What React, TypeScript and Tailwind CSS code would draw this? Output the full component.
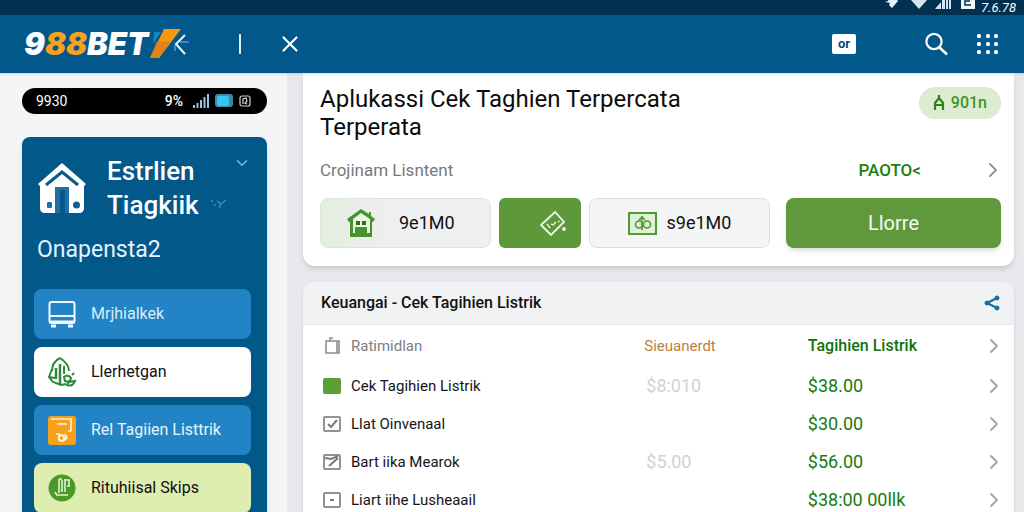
import type { ReactNode } from "react";
import { ChevronDown, ChevronRight, X } from "lucide-react";

function StatusBar() {
  return (
    <div className="flex h-[15px] shrink-0 items-end justify-end overflow-hidden bg-[#02304f] pr-2 text-white">
      <svg className="mb-1.5 h-3 w-4" viewBox="0 0 16 12" fill="#e8f2fa">
        <path d="M2 5 5 4 6 0h6l3 4-6 7-3-3 1-2z" />
      </svg>
      <svg className="mb-1.5 ml-3 h-3 w-4" viewBox="0 0 16 12" fill="#d3e4f1">
        <path d="M0 0h16v3L8 12 0 3z" />
      </svg>
      <svg className="mb-1.5 ml-2 h-3 w-4" viewBox="0 0 16 12" fill="#d3e4f1">
        <path d="M0 12 6 5v7zM7 0h3v12H7zM11 0h2v12h-2zM14 0h2v12h-2z" />
      </svg>
      <svg className="mb-1.5 ml-2.5 h-3 w-[14px]" viewBox="0 0 14 12">
        <path d="M0 0h14v12H0z" fill="#f2f7fb" />
        <path d="M4 3v5h6M5 4h4" fill="none" stroke="#02304f" strokeWidth="1.5" />
      </svg>
      <span className="ml-1.5 text-[13px] leading-[15px] italic">7.6.78</span>
    </div>
  );
}

function Header() {
  return (
    <header className="z-10 flex h-[58px] shrink-0 items-center bg-[#02578b] pr-6 pl-6 text-white shadow">
      <a href="#" className="flex items-center" aria-label="988BET">
        <span className="font-[Inter,sans-serif] text-[31px] leading-8 font-black italic">
          9<span className="text-[#f9a11b]">88</span>BET
        </span>
        <svg className="h-8 w-11" viewBox="0 0 44 32" fill="none">
          <path d="M6 4h7L5 16z" fill="#1d83c0" />
          <path d="M16 1h17L11 30H2z" fill="#f9980f" />
          <path d="m9 13 14 1L11 30H2z" fill="#dc7f1a" opacity=".8" />
          <path d="m37 7-9 9 9 10" stroke="#e7f4fc" strokeWidth="2" />
          <path d="M32 14h9M27 17v6" stroke="#4aa3d6" strokeWidth="1.5" />
        </svg>
      </a>
      <span className="ml-[47px] h-5 w-0.5 bg-[#d9edf8]" />
      <button type="button" aria-label="Close" className="ml-9">
        <X className="size-[26px]" strokeWidth={2} />
      </button>
      <button
        type="button"
        className="ml-auto flex h-5 w-6 items-center justify-center rounded-xs bg-white text-[13px] leading-4 font-bold text-[#0a4a73]"
      >
        or
      </button>
      <button type="button" aria-label="Search" className="ml-[68px]">
        <svg className="size-6" viewBox="0 0 24 24" fill="none" stroke="currentColor" strokeWidth="2.2">
          <circle cx="10" cy="9.500" r="7.600" />
          <path d="m15 15 8 7.500" strokeWidth="2.600" />
        </svg>
      </button>
      <button type="button" aria-label="Menu" className="ml-7">
        <svg className="size-6" viewBox="0 0 24 24" fill="currentColor">
          {[2, 10, 18].map((y) =>
            [3, 12, 20].map((x) => <rect key={`${x}-${y}`} x={x - 2} y={y} width="4" height="4" rx="1.500" />),
          )}
        </svg>
      </button>
    </header>
  );
}

function HouseIcon() {
  return (
    <svg className="h-[52px] w-12 shrink-0" viewBox="0 0 48 52">
      <path d="M24 1 48 22l-2 2v22q0 5-5 5H7q-5 0-5-5V24l-2-2z" fill="#fff" />
      <path d="M8 23 24 10l16 13" fill="none" stroke="#075a8d" strokeWidth="3" />
      <path d="M17 25h14v26H17z" fill="#1a70a8" />
      <path d="M22 28h5v23h-5z" fill="#0b5688" />
      <rect x="9" y="40" width="5" height="6" rx="1" fill="#1a70a8" />
      <circle cx="38.500" cy="43" r="3.500" fill="#0f5f95" />
    </svg>
  );
}

function BusIcon() {
  return (
    <svg className="size-7" viewBox="0 0 28 28" fill="none" stroke="#f0f9ff" strokeWidth="2">
      <rect x="1.500" y="2" width="25" height="21" rx="2" />
      <path d="M2 16h24" />
      <path d="M2 22h24" strokeWidth="3" />
      <path d="M3 26h5M20 26h5" strokeWidth="3" />
    </svg>
  );
}

function LeafIcon() {
  return (
    <svg className="size-8" viewBox="0 0 32 32" fill="none" stroke="#2c8a3a" strokeWidth="2">
      <path d="M14 2C8 5 6 10 6 15M14 2c6 4 9 8 9 13" />
      <path d="M6 13 3 21l4 5 8 3 5-1M3 21l6 1" />
      <path d="M14 8v20M10 12v11" strokeWidth="2.500" />
      <path d="M18 10v8" />
      <path d="M18 21q4-3 7 1-1 5-6 3zM21 29q6 2 8-4l-6 1z" />
      <path d="m26 19 2-2" />
    </svg>
  );
}

function OrangeIcon() {
  return (
    <svg className="h-[29px] w-7" viewBox="0 0 28 29">
      <rect width="28" height="29" rx="3" fill="#f6a01c" />
      <g fill="none" stroke="#fff6dc" strokeWidth="1.600">
        <path d="M3 3h20v12M9 8h10M20 15h3" />
        <path d="M8 18h4M17 18l2 4-4 3" />
        <circle cx="13.500" cy="22" r="2.800" strokeWidth="2" />
      </g>
    </svg>
  );
}

function GreenCoinIcon() {
  return (
    <svg className="size-7" viewBox="0 0 28 28">
      <circle cx="14" cy="14" r="13.500" fill="#4b9a29" />
      <g fill="none" stroke="#e3f4d0" strokeWidth="1.600">
        <path d="M11 5v14M14 6v12M11 5h3M17 5v13" />
        <path d="M17 6h4v6h-2M8 21h12M7 18l2 3" />
      </g>
    </svg>
  );
}

const menu: { label: string; style: string; icon: ReactNode }[] = [
  { label: "Mrjhialkek", style: "bg-[#2284c5] text-[#d8eefb]", icon: <BusIcon /> },
  { label: "Llerhetgan", style: "bg-white text-[#111]", icon: <LeafIcon /> },
  { label: "Rel Tagiien Listtrik", style: "bg-[#2284c5] text-[#e6f5fd]", icon: <OrangeIcon /> },
  { label: "Rituhiisal Skips", style: "bg-[#deedb0] text-[#111]", icon: <GreenCoinIcon /> },
];

function Sidebar() {
  return (
    <aside className="w-[287px] shrink-0 bg-[#f4f5f7] pt-[15px] pr-5 pl-[22px]">
      <div className="flex h-[26px] items-center rounded-full bg-black pr-3.5 pl-3.5 text-sm leading-5 text-white">
        <span>9930</span>
        <span className="ml-auto font-medium">9%</span>
        <svg className="ml-2.5 h-4 w-4" viewBox="0 0 16 16" fill="#8fc7e4">
          <path d="M0 12h2v3H0zM3.500 10h2v5h-2zM7 7h2v8H7zM10.500 4h2v11h-2zM14 1h2v14h-2z" />
        </svg>
        <svg className="ml-1.5 h-3.5 w-[18px]" viewBox="0 0 18 14">
          <rect width="18" height="13" rx="3" fill="#3f88a6" />
          <rect x="2" y="2" width="12" height="10" rx="2" fill="#37c4f4" />
        </svg>
        <svg className="mr-0.5 ml-1.5 h-3 w-3" viewBox="0 0 12 12" fill="none" stroke="#d6d6d6" strokeWidth="1.200">
          <rect x="1" y="1" width="10" height="10" rx="2" />
          <path d="M4 9V4l3-1 1 3-2 2 2 1" />
        </svg>
      </div>
      <nav className="mt-[23px] rounded-t-lg bg-[#03588a] pt-[17px] pr-4 pb-6 pl-3 text-white shadow-md">
        <div className="flex items-start pl-1">
          <div className="pt-2">
            <HouseIcon />
          </div>
          <h2 className="ml-[21px] text-[26px] leading-[34px] font-medium">
            Estrlien
            <br />
            Tiagkiik
          </h2>
          <div className="ml-auto flex h-[68px] flex-col items-end justify-between">
            <button type="button" aria-label="Expand">
              <ChevronDown className="size-[18px] text-[#7fbce0]" />
            </button>
            <svg className="mr-6 mb-3 h-3 w-4" viewBox="0 0 16 12" fill="none" stroke="#3b8fc2" strokeWidth="1.500">
              <path d="M0 3h2M3 7h2M6 3l4 3 5-4M10 6 8 10" />
            </svg>
          </div>
        </div>
        <p className="mt-3 pl-[3px] text-[23px] leading-8 text-[#e2f3fd]">Onapensta2</p>
        <ul className="mt-[23px] flex flex-col gap-2">
          {menu.map((item) => (
            <li key={item.label}>
              <button
                type="button"
                className={`flex h-[50px] w-full items-center rounded-lg pl-3 text-left text-base leading-6 ${item.style}`}
              >
                <span className="flex w-8 justify-center">{item.icon}</span>
                <span className="ml-[13px] whitespace-nowrap">{item.label}</span>
              </button>
            </li>
          ))}
        </ul>
      </nav>
    </aside>
  );
}

function SummaryCard() {
  return (
    <section className="rounded-b-xl bg-white pt-3 pr-[13px] pb-[18px] pl-[17px] shadow-md">
      <div className="flex items-start justify-between">
        <h1 className="text-2xl leading-7 text-[#0c0c0c]">
          Aplukassi Cek Taghien Terpercata
          <br />
          Terperata
        </h1>
        <span className="mt-0.5 flex h-8 items-center rounded-full bg-[#dcecd3] px-3.5 text-base font-medium text-[#3f9523]">
          <svg className="mr-1.5 h-4 w-3" viewBox="0 0 12 16" fill="none" stroke="#2f8418" strokeWidth="2.200">
            <path d="M6 0v4M2 15V8l4-5 4 5v7M1 10h10" />
          </svg>
          901n
        </span>
      </div>
      <div className="mt-[17px] flex h-6 items-center">
        <span className="text-[17px] leading-6 text-[#77797b]">Crojinam Lisntent</span>
        <span className="mr-[60px] ml-auto text-[17px] leading-6 font-medium text-[#1b8011]">PAOTO&lt;</span>
        <button type="button" aria-label="Open details" className="-mr-1">
          <ChevronRight className="size-6 text-[#8f9294]" strokeWidth={1.8} />
        </button>
      </div>
      <div className="mt-4 grid grid-cols-[171fr_82fr_181fr_223fr] gap-2 text-lg leading-6 text-[#111]">
        <button
          type="button"
          className="flex h-[50px] items-center rounded-lg border border-[#dfe1e3] bg-linear-to-r from-[#e4eee0] via-[#eff0f1] to-[#eff0f1] pl-[26px]"
        >
          <svg className="mr-6 h-[30px] w-7" viewBox="0 0 28 30">
            <path d="M14 1 0 11l2 3h1v15h22V14h1l2-3-4-3V4h-2v2z" fill="#4a9230" />
            <path d="M14 5 6 11v14h2V19h12v6h3V11z" fill="#e9f7e2" />
            <path d="M9 13h4v4H9zM15 13h4v4h-4z" fill="#2f6e22" />
          </svg>
          9e1M0
        </button>
        <button
          type="button"
          aria-label="Voucher"
          className="flex h-[50px] items-center justify-end rounded-md bg-[#5d993b] pr-3.5"
        >
          <svg className="size-[27px]" viewBox="0 0 27 27" fill="none" stroke="#f1f9ea" strokeWidth="1.800">
            <path d="m1 15 14-13 9 10L11 25z" />
            <path d="m7 14 3 4M11 14l2 1M13 15l3-3M18 12l2-1" strokeWidth="1.300" />
            <circle cx="24" cy="19" r="1" />
          </svg>
        </button>
        <button
          type="button"
          className="flex h-[50px] items-center justify-center gap-2.5 rounded-lg border border-[#dcdfe1] bg-[#f4f5f6]"
        >
          <svg className="h-[23px] w-[29px]" viewBox="0 0 29 23" fill="none" stroke="#4f9936">
            <rect x="1" y="1" width="27" height="21" fill="#dff2d3" strokeWidth="2" />
            <circle cx="11" cy="12.500" r="3.500" strokeWidth="1.600" />
            <circle cx="19" cy="12.500" r="3.500" strokeWidth="1.600" />
            <path d="M14 4v14M11 8l3-3 3 3" strokeWidth="1.600" />
          </svg>
          s9e1M0
        </button>
        <button
          type="button"
          className="ml-2 flex h-[50px] items-center justify-center rounded-lg bg-[#5f993c] text-xl text-[#f6fbf2] shadow-md"
        >
          Llorre
        </button>
      </div>
    </section>
  );
}

type Mark = "filled" | "tick" | "fold" | "dot";

const rows: { name: string; mark: Mark; before: string; price: string }[] = [
  { name: "Cek Tagihien Listrik", mark: "filled", before: "$8:010", price: "$38.00" },
  { name: "Llat Oinvenaal", mark: "tick", before: "", price: "$30.00" },
  { name: "Bart iika Mearok", mark: "fold", before: "$5.00", price: "$56.00" },
  { name: "Liart iihe Lusheaail", mark: "dot", before: "", price: "$38:00 00llk" },
];

const markPaths: Record<Mark, string> = {
  filled: "",
  tick: "M5 8l3 3 6-7",
  fold: "M2 4l6 1 7-3M6 12l9-8",
  dot: "M7 8h4",
};

function RowCheckbox({ id, mark }: { id: string; mark: Mark }) {
  return (
    <span className="grid shrink-0 place-items-center">
      <input
        id={id}
        type="checkbox"
        defaultChecked={mark === "filled"}
        className="col-start-1 row-start-1 h-4 w-[18px] appearance-none rounded-xs border-2 border-[#909395] checked:border-[#5a9e38] checked:bg-[#5a9e38]"
      />
      <svg
        className="pointer-events-none col-start-1 row-start-1 h-4 w-[18px]"
        viewBox="0 0 18 16"
        fill="none"
        stroke="#777a7c"
        strokeWidth="2"
      >
        <path d={markPaths[mark]} />
      </svg>
    </span>
  );
}

function RowChevron({ label }: { label: string }) {
  return (
    <button type="button" aria-label={label} className="flex w-full justify-end pr-2">
      <ChevronRight className="size-6 text-[#a2a5a7]" strokeWidth={1.8} />
    </button>
  );
}

function BillsCard() {
  return (
    <section className="mt-4 overflow-hidden rounded-t-xl bg-white shadow">
      <div className="flex h-[43px] items-center justify-between border-b border-[#e4e6e8] bg-[#f1f2f4] pr-3.5 pl-[18px]">
        <h2 className="text-base leading-6 font-medium text-[#111]">Keuangai - Cek Tagihien Listrik</h2>
        <button type="button" aria-label="Share">
          <svg className="size-4" viewBox="0 0 16 16" fill="#0d6ea8" stroke="#0d6ea8">
            <path d="M13 3 3 8l10 5" fill="none" strokeWidth="2.200" />
            <circle cx="13" cy="3" r="2" />
            <circle cx="3" cy="8" r="2" />
            <circle cx="13" cy="13" r="2" />
          </svg>
        </button>
      </div>
      <table className="w-full table-fixed text-left text-[15px] leading-6">
        <thead>
          <tr className="h-[42px]">
            <th scope="col" className="w-[48%] pl-5 font-normal text-[#7d8083]">
              <span className="flex items-center">
                <svg className="h-[18px] w-[18px]" viewBox="0 0 18 18" fill="none" stroke="#8b8e90" strokeWidth="1.600">
                  <path d="M3 4h13v12H3zM7 4V1h3M14 4v12" />
                </svg>
                <span className="ml-2.5">Ratimidlan</span>
              </span>
            </th>
            <th scope="col" className="w-[23%] font-normal text-[#c0803c]">
              Sieuanerdt
            </th>
            <th scope="col" className="text-base font-medium text-[#12700f]">
              Tagihien Listrik
            </th>
            <th scope="col" className="w-16">
              <RowChevron label="Open all" />
            </th>
          </tr>
        </thead>
        <tbody>
          {rows.map((row) => (
            <tr key={row.name} className="h-[38px]">
              <td className="pl-5">
                <span className="flex items-center">
                  <RowCheckbox id={`row-${row.mark}`} mark={row.mark} />
                  <label htmlFor={`row-${row.mark}`} className="ml-2.5 text-[#151515]">
                    {row.name}
                  </label>
                </span>
              </td>
              <td className="pl-0.5 text-lg leading-6 text-[#d0d2d4]">{row.before}</td>
              <td className="text-lg leading-6 whitespace-nowrap text-[#147c10]">{row.price}</td>
              <td>
                <RowChevron label={`Open ${row.name}`} />
              </td>
            </tr>
          ))}
        </tbody>
      </table>
    </section>
  );
}

export default function App() {
  return (
    <div className="flex h-screen flex-col overflow-hidden bg-[#e7e8eb] font-[Roboto,sans-serif]">
      <StatusBar />
      <Header />
      <div className="flex min-h-0 flex-1">
        <Sidebar />
        <main className="min-w-0 flex-1 pr-2.5 pl-4">
          <SummaryCard />
          <BillsCard />
        </main>
      </div>
    </div>
  );
}
